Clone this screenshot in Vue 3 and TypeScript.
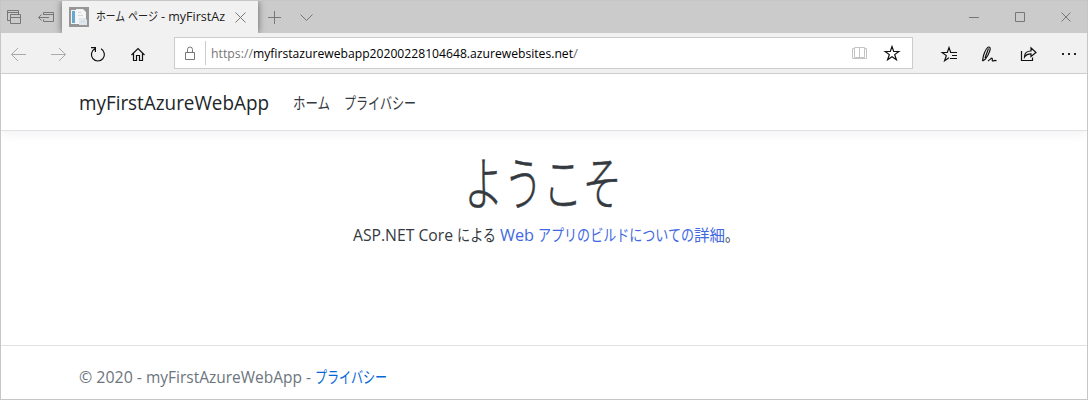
<script setup lang="ts">
import type { ObjectDirective } from 'vue'

// Condenses a run of text horizontally to the given width in pixels.
const vFit: ObjectDirective<HTMLElement, number> = {
  mounted(el, binding) {
    const natural = el.getBoundingClientRect().width
    el.style.transform = `scaleX(${binding.value / natural})`
    el.style.marginRight = `${binding.value - natural}px`
  },
}
</script>

<template>
  <div class="window">
    <header class="tabs">
      <svg class="set-aside" width="61" height="31" viewBox="1 1 61 31">
        <path d="M10.500 20.500H7.500V10.500H18.500V14.500M7.500 12.500H18.500" />
        <path d="M10.500 14.500H20.500V23.500H10.500ZM10.500 17.500H20.500" />
        <path d="M43.500 15V12.500H53.500V21.500H43.500V19.500M43.500 14.500H53.500M49 17.500H38.500M41.500 14.500L38.500 17.500L41.500 20.500" />
      </svg>
      <div class="tab">
        <svg class="favicon" width="20" height="20" viewBox="0 0 20 20">
          <rect width="20" height="20" fill="#969696" />
          <path d="M2 3H9V17H2Z" fill="#f4f4f4" />
          <path d="M3 4H6V16H3Z" fill="#65a9d2" />
          <path d="M7 2H14L17 5V17H7Z" fill="#f5f5f5" />
          <path d="M10 11H16L18 13V18H10Z" fill="#dfe6ee" />
          <path d="M9 5.500H12M9 8.500H14M12 14.500H16" stroke="#d0d8e0" />
        </svg>
        <div class="tab-title"><span v-fit="29">ホーム</span><span v-fit="30" class="page">ページ</span><span v-fit="64" class="name">- myFirstAz</span></div>
        <svg class="close" width="11" height="11" viewBox="0 0 11 11"><path d="M.5.500L10.500 10.500M10.500.500L.5 10.500" /></svg>
      </div>
      <svg class="tab-tools" width="60" height="31" viewBox="258 1 60 31">
        <path d="M268 17.500H281M274.500 11V24" /><path d="M300.500 14.500L306.500 20.500L312.500 14.500" />
      </svg>
      <svg class="controls" width="127" height="31" viewBox="960 1 127 31">
        <path d="M969 17.500H979M1015.500 12.500H1024.500V21.500H1015.500ZM1061.500 12.500L1070.500 21.500M1070.500 12.500L1061.500 21.500" />
      </svg>
    </header>
    <div class="toolbar">
      <svg class="navigation" width="173" height="41" viewBox="1 32 173 41">
        <path class="faint" d="M11.500 53.500H26M18 47L11.500 53.500L18 60" />
        <path class="faint" d="M51 53.500H65.500M59 47L65.500 53.500L59 60" />
        <path d="M94.800 47.800A6.500 6.500 0 1 0 101 47.800M91 46.600H95.400V51" />
        <path d="M131.500 54L138 47.500L144.500 54M133.500 52.500V59.500H136.500V54.500H139.500V59.500H142.500V52.500" />
      </svg>
      <div class="address">
        <svg class="lock" width="12" height="15" viewBox="0 0 12 15"><path d="M1.500 6.500H10.500V13.500H1.500ZM3.500 6.500V3.500A2.500 2.500 0 0 1 8.500 3.500V6.500" /></svg>
        <i class="divider"></i>
        <div class="url"><span v-fit="42" class="muted">https://</span><span v-fit="320">myfirstazurewebapp20200228104648.azurewebsites.net</span><span v-fit="5" class="muted">/</span></div>
        <svg class="page-actions" width="60" height="31" viewBox="852 38 60 31">
          <path class="book" d="M859.500 47.500V58.500H852.500V48.500M859.500 47.500H854.500V57.500H859.500M859.500 47.500H864.500V57.500H859.500M866.500 48.500V58.500H859.500M852.500 48.500H854.500M864.500 48.500H866.500" />
          <path class="ink" d="M892 46.500L893.700 51.500H898.800L894.700 54.600L896.400 59.800L892 56.700L887.600 59.800L889.300 54.600L885.200 51.500H890.300Z" />
        </svg>
      </div>
      <svg class="actions" width="174" height="41" viewBox="913 32 174 41">
        <path d="M952 51.500H950.700L949 46.500L947.300 51.500H942.200L946.300 54.600L944.600 59.800L949 56.700M950 51.500H957M952 54.500H957M950 57.500H957" />
        <path d="M982.500 60L983.500 54.500C985 50 987 45.800 989 46C991.500 46.300 989.800 52 985.500 58L982.500 60M985 57L988.500 47.500M988 60C990.500 58.500 991.500 56.500 992.200 57.500C992.800 58.500 991.500 60 993 60C994.500 60 994.500 58.500 996.500 60" />
        <path d="M1021.500 50V59.500H1032.500V56.500M1024.500 56C1024.500 52 1027 50 1031 50V46.800L1036 51.500L1031 55.500V52.800C1028 52.800 1026 53.500 1024.500 56Z" />
        <path class="dots" d="M1062 52h2v2h-2zM1068 52h2v2h-2zM1074 52h2v2h-2z" />
      </svg>
    </div>
    <nav class="site-nav">
      <span v-fit="190" class="brand">myFirstAzureWebApp</span>
      <a v-fit="37" class="home">ホーム</a>
      <a v-fit="72" class="privacy">プライバシー</a>
    </nav>
    <main>
      <h1><span v-fit="158">ようこそ</span></h1>
      <p><span v-fit="100">ASP.NET Core</span><span v-fit="39" class="by">による</span><a v-fit="34" class="web">Web</a><a v-fit="156" class="learn">アプリのビルドについての</a><a v-fit="31">詳細</a><span v-fit="14">。</span></p>
    </main>
    <footer><span v-fit="63">© 2020 -</span><span v-fit="165" class="app-name">myFirstAzureWebApp -</span><a v-fit="72">プライバシー</a></footer>
  </div>
</template>

<style>
body { margin: 0; }
</style>

<style scoped>
.window {
  box-sizing: border-box;
  width: 1088px;
  height: 400px;
  border: 1px solid #c6c6c6;
  background: #fff;
  color: #343a40;
  font-family: "Open Sans", "Noto Sans CJK JP", sans-serif;
  display: flex;
  flex-direction: column;
  overflow: hidden;
}
span, a { display: inline-block; white-space: nowrap; transform-origin: left center; }
svg { display: block; flex: none; fill: none; stroke: #777; stroke-width: 1; }
.tabs { height: 32px; flex: none; display: flex; background: #cbcbcb; }
.tab {
  width: 196px;
  height: 32px;
  box-sizing: border-box;
  padding: 0 12px 0 7px;
  display: flex;
  align-items: center;
  background: #f1f1f1;
  box-shadow: 0 0 7px #0008;
  clip-path: inset(0 -10px 0 -10px);
}
.favicon { stroke: none; }
.tab-title { margin-left: 7px; width: 130px; display: flex; align-items: center; height: 20px; font-size: 12.5px; line-height: 20px; color: #222; }
.tab-title > * { flex: none; }
.page { margin-left: 3px; }
.name { margin-left: 3px; }
.close { margin-left: 10px; }
.tab-tools { margin-right: auto; }
.toolbar { height: 41px; flex: none; display: flex; background: #f1f1f1; border-bottom: 1px solid #cfcfcf; box-sizing: border-box; }
.navigation, .actions { stroke: #111; stroke-width: 1.2; }
.navigation .faint { stroke: #aaa; stroke-width: 1; }
.address { box-sizing: border-box; width: 739px; height: 32px; margin-top: 4px; border: 1px solid #ccc; background: #fff; display: flex; align-items: center; }
.lock { margin-left: 9px; }
.divider { width: 1px; height: 24px; background: #ccc; margin-left: 9px; }
.url { margin-left: 5px; width: 641px; font-size: 13px; line-height: 20px; color: #000; display: flex; }
.url span { flex: none; }
.url .muted { color: #777; }
.page-actions .book { stroke: #c4c4c4; }
.page-actions .ink { stroke: #111; stroke-width: 1.2; }
.actions .dots { fill: #222; stroke: none; }
.site-nav { height: 57px; box-sizing: border-box; flex: none; display: flex; align-items: center; padding-left: 78px; padding-top: 1px; border-bottom: 1px solid #dee2e6; box-shadow: 0 4px 10px #0000000d; font-size: 16px; }
.brand { font-size: 20px; line-height: 30px; color: #212529; }
.home { margin-left: 24px; line-height: 24px; }
.privacy { margin-left: 14px; line-height: 24px; }
main { height: 214px; flex: none; }
h1 { margin: 18px 0 0 463px; height: 67px; font-weight: 300; font-size: 58px; line-height: 67px; -webkit-text-stroke: 0.5px #343a40; }
p { margin: 7px 0 0 352px; display: flex; font-size: 16px; line-height: 24px; }
p > * { flex: none; }
.by { margin-left: 4px; }
.web { margin-left: 4px; }
.learn { margin-left: 4px; }
p a { color: #4169e1; }
footer { flex: 1; border-top: 1px solid #dfe1e3; padding: 19px 0 0 78px; display: flex; font-size: 16px; line-height: 24px; color: #6c757d; }
footer .app-name { margin-left: 4px; }
footer a { color: #0366d6; margin-left: 4px; }
footer > * { flex: none; height: 24px; }
</style>
